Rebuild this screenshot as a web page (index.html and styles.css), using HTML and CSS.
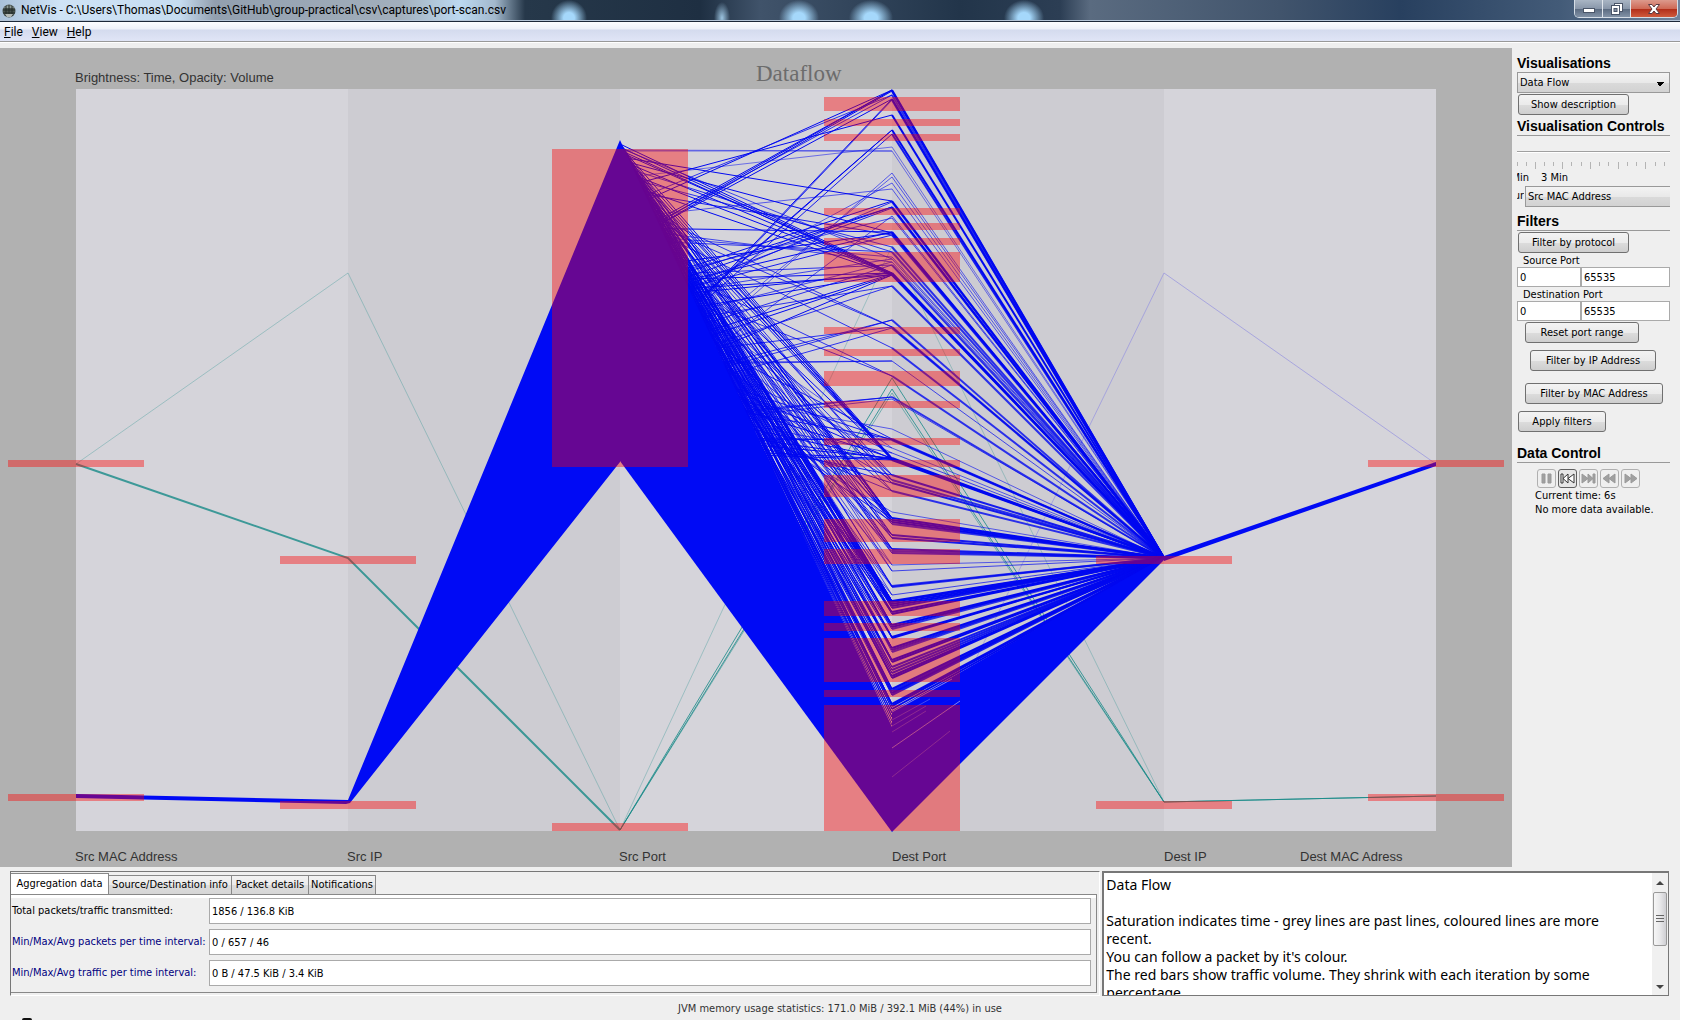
FILE: index.html
```html
<!DOCTYPE html>
<html lang="en">
<head>
<meta charset="utf-8">
<title>NetVis</title>
<link rel="stylesheet" href="styles.css">
</head>
<body>
<div class="app">
  <header class="titlebar">
    <svg class="app-icon" width="14" height="14" viewBox="0 0 14 14" aria-hidden="true">
      <circle cx="7" cy="7" r="6.5" fill="#48524e"/>
      <path d="M2 4a6 6 0 0 1 10 0z" fill="#8d9a96"/>
      <path d="M1 6h12M1 9h12M4 2v10M7 1v12M10 2v10" stroke="#222b28" stroke-width="1"/>
      <path d="M3 10h8l-2 3H5z" fill="#b3b9b6"/>
    </svg>
    <span class="title">NetVis - C:\Users\Thomas\Documents\GitHub\group-practical\csv\captures\port-scan.csv</span>
    <div class="window-buttons">
      <button class="win" aria-label="Minimize"><svg width="14" height="12" viewBox="0 0 14 12"><rect x="1.500" y="5.500" width="11" height="4" fill="#fff" stroke="#4a5568"/></svg></button>
      <button class="win" aria-label="Restore"><svg width="14" height="14" viewBox="0 0 14 14"><rect x="4.500" y="1.500" width="8" height="8" fill="#fff" stroke="#4a5568"/><rect x="1.500" y="3.500" width="8" height="9" fill="#fff" stroke="#4a5568"/><rect x="4" y="6.500" width="3" height="3" fill="#8592a5" stroke="#4a5568"/></svg></button>
      <button class="win close" aria-label="Close"><svg width="14" height="12" viewBox="0 0 14 12"><path d="M1.500 1.500h3.500l2 2.500 2-2.500h3.500L9 6l3.500 4.500H9L7 8l-2 2.500H1.500L5 6z" fill="#fff" stroke="#5b3a42"/></svg></button>
    </div>
  </header>
  <nav class="menubar">
    <button><u>F</u>ile</button>
    <button><u>V</u>iew</button>
    <button><u>H</u>elp</button>
  </nav>
  <main class="workspace">
    <svg class="chart" viewBox="0 48 1512 819" role="img" aria-label="Dataflow">
      <rect x="0" y="48" width="1512" height="819" fill="#b1b1b1"/>
      <rect x="76" y="89" width="1360" height="742" fill="#d5d4da"/>
      <rect x="348" y="89" width="272" height="742" fill="#cdccd2"/>
      <rect x="892" y="89" width="272" height="742" fill="#cdccd2"/>
      <g fill="none" stroke="#178a87">
        <path d="M76 464L348 273L620 830L892 246L1164 802" opacity=".3"/>
        <path d="M76 464L348 558L620 830" stroke-width="2" opacity=".8"/>
        <path d="M620 830L892 378L1164 802L1436 796M620 830L892 389L1164 802" opacity=".8"/>
        <path d="M620 830L892 393L1164 802" opacity=".5"/>
        <path d="M1164 802L1436 796" opacity=".8"/>
      </g>
      <path d="M892 831L1164 273L1436 464" fill="none" stroke="#9c9adf" opacity=".8"/>
      <g class="flows" id="flows"></g>
      <g fill="#000af5">
        <path d="M76 794L348 800L620 140V462L350 803L346 804L76 798z"/>
        <path d="M620 140L892 727V832L620 461z"/>
        <path d="M892 711L1164 557V560L892 832z"/>
        <path d="M1164 556L1436 462V466L1164 561z"/>
      </g>
      <g stroke="#dcd2e6" fill="none">
        <path d="M892 712L952 679M892 748L960 701" opacity=".6"/>
        <path d="M892 720L930 699M892 726L926 706M892 732L926 711M892 777L950 731" opacity=".3"/>
      </g>
      <g fill="#ff0000" fill-opacity=".4" shape-rendering="crispEdges" id="bars"></g>
      <g class="axis-label">
        <text x="75" y="82">Brightness: Time, Opacity: Volume</text>
        <text x="75" y="861">Src MAC Address</text>
        <text x="347" y="861">Src IP</text>
        <text x="619" y="861">Src Port</text>
        <text x="892" y="861">Dest Port</text>
        <text x="1164" y="861">Dest IP</text>
        <text x="1300" y="861">Dest MAC Adress</text>
      </g>
      <text class="chart-title" x="756" y="81">Dataflow</text>
    </svg>
    <aside class="sidebar">
      <h2>Visualisations</h2>
      <select class="pick" aria-label="Visualisation"><option>Data Flow</option></select>
      <button class="btn w112">Show description</button>
      <h2 class="ruled controls-head">Visualisation Controls</h2>
      <input class="range" type="range" aria-label="Time range">
      <svg class="ticks" width="153" height="8" viewBox="0 0 153 8" aria-hidden="true"><path d="M.5 0v4M9.500 0v4M27.500 0v4M36.500 0v4M54.500 0v4M64.500 0v4M82.500 0v4M91.500 0v4M110.500 0v4M119.500 0v4M138.500 0v4M147.500 0v4M18.500 0v7M45.500 0v7M73.500 0v7M101.500 0v7M128.500 0v7" stroke="#b4b4b4"/></svg>
      <div class="tick-labels"><span class="cut">Min</span><span>3 Min</span></div>
      <div class="color-row"><label class="cut" for="colour">ur</label><select class="pick clipped" id="colour"><option>Src MAC Address</option></select></div>
      <h2 class="ruled filters-head">Filters</h2>
      <button class="btn w112 protocol">Filter by protocol</button>
      <label class="port" for="src-from">Source Port</label>
      <div class="ports"><input id="src-from" value="0"><input aria-label="Source port to" value="65535"></div>
      <label class="port" for="dst-from">Destination Port</label>
      <div class="ports"><input id="dst-from" value="0"><input aria-label="Destination port to" value="65535"></div>
      <button class="btn reset">Reset port range</button>
      <button class="btn by-ip">Filter by IP Address</button>
      <button class="btn by-mac">Filter by MAC Address</button>
      <button class="btn apply">Apply filters</button>
      <h2 class="ruled data-head">Data Control</h2>
      <div class="media">
        <button disabled aria-label="Pause"><svg viewBox="0 0 17 17"><path d="M4 4h3v9H4zM10 4h3v9h-3z"/></svg></button>
        <button aria-label="To start"><svg viewBox="0 0 17 17"><path d="M2 4h2v9H2zM9 4v9L4 8.500zM15 4v9L9 8.500z"/></svg></button>
        <button disabled aria-label="To end"><svg viewBox="0 0 17 17"><path d="M13 4h2v9h-2zM8 4v9l5-4.500zM2 4v9l6-4.500z"/></svg></button>
        <button disabled aria-label="Slower"><svg viewBox="0 0 17 17"><path d="M8 4v9L2 8.500zM14 4v9L8 8.500z"/></svg></button>
        <button disabled aria-label="Faster"><svg viewBox="0 0 17 17"><path d="M9 4v9l6-4.500zM3 4v9l6-4.500z"/></svg></button>
      </div>
      <p class="info">Current time: 6s</p>
      <p class="info">No more data available.</p>
    </aside>
  </main>
  <section class="bottom">
    <div class="tabs">
      <div class="tablist" role="tablist">
        <button role="tab" class="tab active" aria-selected="true">Aggregation data</button>
        <button role="tab" class="tab t2">Source/Destination info</button>
        <button role="tab" class="tab t3">Packet details</button>
        <button role="tab" class="tab t4">Notifications</button>
      </div>
      <div class="tabpanel">
        <label for="total">Total packets/traffic transmitted:</label><input id="total" readonly value="1856 / 136.8 KiB">
        <label class="navy" for="packets">Min/Max/Avg packets per time interval:</label><input id="packets" readonly value="0 / 657 / 46">
        <label class="navy" for="traffic">Min/Max/Avg traffic per time interval:</label><input id="traffic" readonly value="0 B / 47.5 KiB / 3.4 KiB">
      </div>
    </div>
    <div class="description">
      <textarea readonly aria-label="Description">Data Flow

Saturation indicates time - grey lines are past lines, coloured lines are more
recent.
You can follow a packet by it's colour.
The red bars show traffic volume. They shrink with each iteration by some
percentage.</textarea>
      <div class="scrollbar" aria-hidden="true">
        <svg width="8" height="4" viewBox="0 0 8 4"><path d="M4 0l4 4H0z" fill="#444"/></svg>
        <div class="thumb"><svg width="8" height="9" viewBox="0 0 8 9"><path d="M0 .5h8M0 3.500h8M0 6.500h8" stroke="#666"/></svg></div>
        <svg class="down" width="8" height="4" viewBox="0 0 8 4"><path d="M4 4l4-4H0z" fill="#444"/></svg>
      </div>
    </div>
  </section>
  <footer class="status"><p>JVM memory usage statistics: 171.0 MiB / 392.1 MiB (44%) in use</p><i class="grip"></i></footer>
</div>
<script src="chart.js"></script>
</body>
</html>
```
FILE: styles.css
```css
* { box-sizing: border-box; }
body {
  margin: 0;
  background: #efefef;
  color: #000;
  font: 11px/14px "DejaVu Sans Condensed", "Noto Sans", sans-serif;
}
button, input, select { font: inherit; color: inherit; margin: 0; }
h2, p { margin: 0; }
.app { border-right: 2px solid #fff; border-bottom: 2px solid #fff; }

.titlebar {
  display: flex;
  align-items: flex-start;
  height: 22px;
  padding-left: 2px;
  border-bottom: 1px solid #1c2838;
  box-shadow: inset 0 -1px #b4c4d6;
  background:
    radial-gradient(ellipse 18px 18px at 569px 18px, #a5d8fb 30%, transparent),
    radial-gradient(ellipse 8px 16px at 722px 18px, #9cc4e0, transparent),
    radial-gradient(ellipse 20px 18px at 799px 18px, #a5d8fb 30%, transparent),
    radial-gradient(ellipse 22px 18px at 871px 18px, #a5d8fb 30%, transparent),
    radial-gradient(ellipse 20px 18px at 1024px 18px, #a5d8fb 30%, transparent),
    linear-gradient(90deg, #a9c1da 0, #cfe3f6 60px, #c6dcf0 180px, #929fae 215px, #a2afbc 400px, #bcd9f1 460px, #a2b8cc 495px, #26384a 525px, #1e2f42 700px, #40536a 760px, #22354a 960px, #2c3e54 1060px, #5a6b80 1090px, #41546c 1280px, #28405f 1400px, #435b78 1560px, #70839c);
}
.app-icon { margin: 4px 5px 0 0; }
.title { font: 12px/21px Roboto, "Noto Sans", sans-serif; white-space: nowrap; }
.window-buttons {
  display: flex;
  height: 18px;
  margin: 0 2px 0 auto;
  border: 1px solid #d5dde6;
  border-top: 0;
  border-radius: 0 0 5px 5px;
  overflow: hidden;
}
.win {
  display: flex;
  align-items: center;
  justify-content: center;
  width: 28px;
  padding: 0;
  border: 0;
  border-right: 1px solid #dfe5ec;
  background: linear-gradient(#a9b5c4 0, #8997aa 50%, #5a6a80 52%, #8292a6);
}
.win.close { width: 46px; border: 0; background: linear-gradient(#dc9a8d 0, #cf6a57 50%, #b02c18 52%, #cf5a3c); }

.menubar {
  display: flex;
  gap: 9px;
  height: 21px;
  padding-left: 4px;
  border-bottom: 1px solid #fff;
  box-shadow: inset 0 -1px #999;
  background: linear-gradient(#fcfdff 0, #eef1f9 7px, #d4dbee 8px, #e1e6f7);
}
.menubar button { padding: 0; border: 0; background: none; font: 12px/20px Roboto, "Noto Sans", sans-serif; }

.workspace { display: grid; grid-template-columns: minmax(0, 1fr) 168px; padding-top: 5px; }
.chart { display: block; width: 100%; height: auto; }
.flows { fill: none; stroke: #0008f0; }
.axis-label { font: 13px "Liberation Sans", Arial, sans-serif; fill: #333; }
.chart-title { font: 23px "Liberation Serif", serif; fill: #6c6c6c; }

.sidebar { padding: 7px 10px 0 5px; overflow: hidden; }
.sidebar h2 { font: bold 14px/16px "Liberation Sans", Arial, sans-serif; white-space: nowrap; }
.ruled { padding-bottom: 1px; border-bottom: 1px solid #999; }
.pick {
  display: block;
  width: 100%;
  height: 21px;
  margin-top: 1px;
  padding: 0 2px;
  appearance: none;
  border: 1px solid #999;
  border-radius: 0;
  background:
    conic-gradient(from -45deg at 50% 100%, transparent 90deg, transparent 0),
    linear-gradient(#f3f3f3 0, #e9e9e9 50%, #dadada 52%, #d2d2d2);
  background:
    conic-gradient(from -45deg at 50% 100%, #000 90deg, transparent 0) right 5px top 9px / 8px 4px no-repeat,
    linear-gradient(#f3f3f3 0, #e9e9e9 50%, #dadada 52%, #d2d2d2);
}
.btn {
  display: block;
  height: 21px;
  margin-top: 1px;
  margin-left: 1px;
  padding: 0;
  border: 1px solid #707070;
  border-radius: 3px;
  background: linear-gradient(#f3f3f3 0, #ebebeb 50%, #dcdcdc 52%, #cecece);
  white-space: nowrap;
}
.w112 { width: 111px; }
.protocol { margin-bottom: 1px; }
.controls-head { margin-top: 3px; }
.range {
  display: block;
  width: 100%;
  height: 16px;
  appearance: none;
  background: none;
  border-bottom: 1px solid #a0a0a0;
  box-shadow: 0 1px #fff;
}
.range::-webkit-slider-thumb { appearance: none; width: 1px; height: 1px; opacity: 0; }
.ticks { display: block; margin-top: 10px; }
.tick-labels { display: flex; gap: 12px; padding-top: 1px; }
.cut { display: flex; justify-content: flex-end; width: 12px; overflow: hidden; white-space: nowrap; }
.color-row { display: flex; align-items: center; gap: 1px; }
.color-row .cut { width: 7px; }
.color-row .pick { flex: 1; margin-top: 1px; border-right: 0; background: linear-gradient(#f3f3f3 0, #e9e9e9 50%, #dadada 52%, #d2d2d2); }
.filters-head { margin-top: 6px; }
.port { display: block; margin: 1px 0 0 6px; line-height: 13px; }
.ports { display: grid; grid-template-columns: 64px 1fr; }
.ports input { width: 100%; height: 20px; padding: 0 2px; border: 1px solid #aaa; }
.reset { width: 114px; margin-left: 8px; }
.by-ip { width: 126px; margin: 7px 0 0 13px; }
.by-mac { width: 138px; margin: 12px 0 0 8px; }
.apply { width: 88px; margin-top: 7px; }
.data-head { margin-top: 13px; }
.media { display: flex; gap: 2px; margin: 6px 0 1px 20px; }
.media button { width: 19px; height: 19px; padding: 0; border: 1px solid #606060; border-radius: 3px; background: #e6e6e6; }
.media button:disabled { border-color: #b0b0b0; background: #efefef; }
.media svg { display: block; width: 17px; height: 17px; fill: #fff; stroke: #333; }
.media button:disabled svg { fill: #a0a0a0; stroke: #999; }
.info { margin-left: 18px; white-space: nowrap; }

.bottom { display: grid; grid-template-columns: minmax(0, 1091fr) minmax(0, 567fr); gap: 2px; padding: 4px 11px 0 10px; }
.tabs { padding: 1px 2px 1px 0; border: 1px solid #fff; border-top-color: #777; border-left-color: #777; }
.tablist { display: flex; align-items: flex-end; height: 21px; }
.tab {
  height: 19px;
  padding: 0;
  border: 1px solid #888;
  border-left: 0;
  border-bottom: 0;
  background: linear-gradient(#f2f2f2 0, #ebebeb 50%, #dcdcdc 52%, #d6d6d6);
  white-space: nowrap;
}
.tab.active { width: 98px; height: 21px; background: #fff; }
.t2 { width: 123px; }
.t3 { width: 77px; }
.t4 { width: 67px; }
.tabpanel {
  display: grid;
  grid-template-columns: 197px 1fr;
  align-items: center;
  row-gap: 5px;
  padding: 3px 5px 6px 1px;
  border: 1px solid #888;
  border-left: 0;
  background: linear-gradient(#fff 3px, #efefef 3px);
}
.tabpanel label { white-space: nowrap; }
.tabpanel input { width: 100%; height: 26px; padding: 0 2px; border: 1px solid #aaa; background: #fff; }
.navy { color: #000080; }
.description { display: flex; height: 125px; border: 2px solid #777; border-right-width: 1px; border-bottom-width: 1px; background: #fff; }
.description textarea {
  flex: 1;
  min-width: 0;
  padding: 3px 0 0 2px;
  border: 0;
  outline: 0;
  resize: none;
  overflow: hidden;
  white-space: pre;
  font: 14px/18px "Noto Sans", sans-serif;
}
.scrollbar { display: flex; flex-direction: column; align-items: center; width: 16px; padding: 8px 0 6px; background: #f0f0f0; }
.thumb {
  display: flex;
  align-items: center;
  justify-content: center;
  width: 14px;
  height: 54px;
  margin-top: 7px;
  border: 1px solid #999;
  border-radius: 2px;
  background: linear-gradient(90deg, #f6f6f6, #e8e8ea 50%, #cfcfd3);
}
.down { margin-top: auto; }
.status { display: flex; flex-direction: column; height: 24px; padding-top: 6px; color: #333; }
.status p { text-align: center; }
.grip { width: 10px; height: 2px; margin: 2px 0 0 22px; border-radius: 2px 2px 0 0; background: #111; }
```
FILE: chart.js
```js
const NS = 'http://www.w3.org/2000/svg';

// Traffic bars: axis centre, then top/bottom pairs
const bars = [
  [76, [460, 467, 794, 801]],
  [348, [556, 564, 801, 809]],
  [620, [149, 467, 823, 831]],
  [892, [97, 111, 119, 126, 134, 141, 208, 215, 223, 230, 238, 245, 252, 282,
    327, 334, 349, 356, 371, 386, 401, 408, 438, 445, 460, 467, 475, 497,
    519, 542, 549, 564, 601, 616, 623, 631, 638, 682, 690, 697, 705, 831]],
  [1164, [556, 564, 801, 809]],
  [1436, [460, 467, 794, 801]]
];
const barLayer = document.getElementById('bars');
for (const [x, ys] of bars) {
  for (let i = 0; i < ys.length; i += 2) {
    const r = document.createElementNS(NS, 'rect');
    r.setAttribute('x', x - 68);
    r.setAttribute('y', ys[i]);
    r.setAttribute('width', 136);
    r.setAttribute('height', ys[i + 1] - ys[i]);
    barLayer.append(r);
  }
}

// Flows: destination port position, opacity, source port positions
const flows = [
  [90, 1, [212, 241, 244]], [91, 1, [247]], [95, .8, [206, 243]], [99, 1, [246, 385]], [100, .8, [387]],
  [115, 1, [188]], [130, 1, [367, 369]], [134, .9, [377]], [147, .5, [178]], [151, .5, [150, 151]],
  [173, .6, [413]], [177, .6, [400]], [183, .6, [330]], [189, .6, [218]],
  [201, 1, [157, 290]], [202, .8, [318]], [207, 1, [293, 300]], [208, .9, [310]], [216, .7, [420]], [218, .7, [286]],
  [232, 1, [228, 296]], [233, 1, [270, 160]], [235, .9, [305, 190]],
  [247, .8, [176]], [252, .8, [166, 240]], [257, .7, [234]], [259, .7, [300, 148]],
  [262, .7, [330, 228]], [265, .8, [276, 350]], [273, 1, [144, 152, 281, 300]],
  [274, 1, [147, 160, 170, 320, 358]], [275, 1, [150, 182, 293, 366, 390]],
  [286, .8, [375, 330]], [320, .8, [390, 397]], [327, .8, [200, 360, 210]], [328, .8, [405]],
  [348, .8, [214]], [361, .7, [363, 365]], [376, .8, [246, 270]], [397, .8, [425, 422]], [399, .7, [430]],
  [429, .6, [380]], [439, .9, [441, 300, 390]], [440, .9, [437, 350]], [448, .6, [360, 260]], [453, .7, [320, 400]],
  [458, 1, [146, 158, 167, 370, 432]], [459, 1, [150, 172, 340, 420, 446, 200]], [460, 1, [154, 163, 400, 450]],
  [475, .9, [178, 240, 420]], [480, .8, [200, 320, 165]], [483, .9, [220, 398]], [491, .8, [186, 260, 380]],
  [512, .6, [350]], [518, 1, [146, 155, 164, 240]], [520, 1, [150, 180, 300]], [522, 1, [160, 200, 330]], [524, .8, [143, 260]],
  [535, .9, [148, 190, 280]], [538, .9, [156, 225]], [549, .9, [144, 168, 250]], [551, .8, [176]], [553, .8, [150, 210]],
  [565, .6, [160, 240]], [571, .7, [147, 186]], [586, .8, [152, 200]], [587, .8, [143, 226]], [595, .7, [158, 250]],
  [601, 1, [144, 148, 156, 170, 200]], [602, 1, [146, 152, 164, 190, 230]], [604, 1, [160, 180, 210]], [606, 1, [143, 150, 175, 240]],
  [608, .9, [145, 168]], [612, 1, [149, 184, 220]], [614, 1, [157, 196]], [625, 1, [143, 152, 172]], [627, 1, [148, 190]], [629, .8, [160, 214]],
  [637, 1, [145, 155, 180]], [638, 1, [150, 200]], [648, 1, [144, 164, 190]], [650, .9, [153, 176]], [652, .8, [147]],
  [660, 1, [146, 158, 184]], [662, 1, [151, 170]], [667, .9, [143, 178]], [670, .9, [149, 190]], [673, .9, [155, 168]],
  [676, 1, [147, 182]], [678, 1, [144, 160]], [689, 1, [145, 152, 172]], [691, .9, [149, 180]], [693, 1, [146, 160]], [695, .9, [143, 168]],
  [704, 1, [144, 150, 158]], [706, 1, [147, 164]], [709, 1, [145, 153]], [713, 1, [150, 160]], [717, 1, [143, 154]], [721, 1, [148]], [725, 1, [144]]
];
const flowLayer = document.getElementById('flows');
function addPath(d, opacity, width) {
  const p = document.createElementNS(NS, 'path');
  p.setAttribute('d', d);
  p.setAttribute('stroke-opacity', opacity);
  p.setAttribute('stroke-width', width);
  flowLayer.append(p);
}
for (const [dest, opacity, sources] of flows) {
  addPath(sources.map(s => `M620 ${s}L892 ${dest}`).join(''), opacity, 1);
  // Busy ports leave the axis as a heavier line
  addPath(`M892 ${dest}L1164 558`, opacity, opacity >= .8 ? 2 : 1);
}
```
